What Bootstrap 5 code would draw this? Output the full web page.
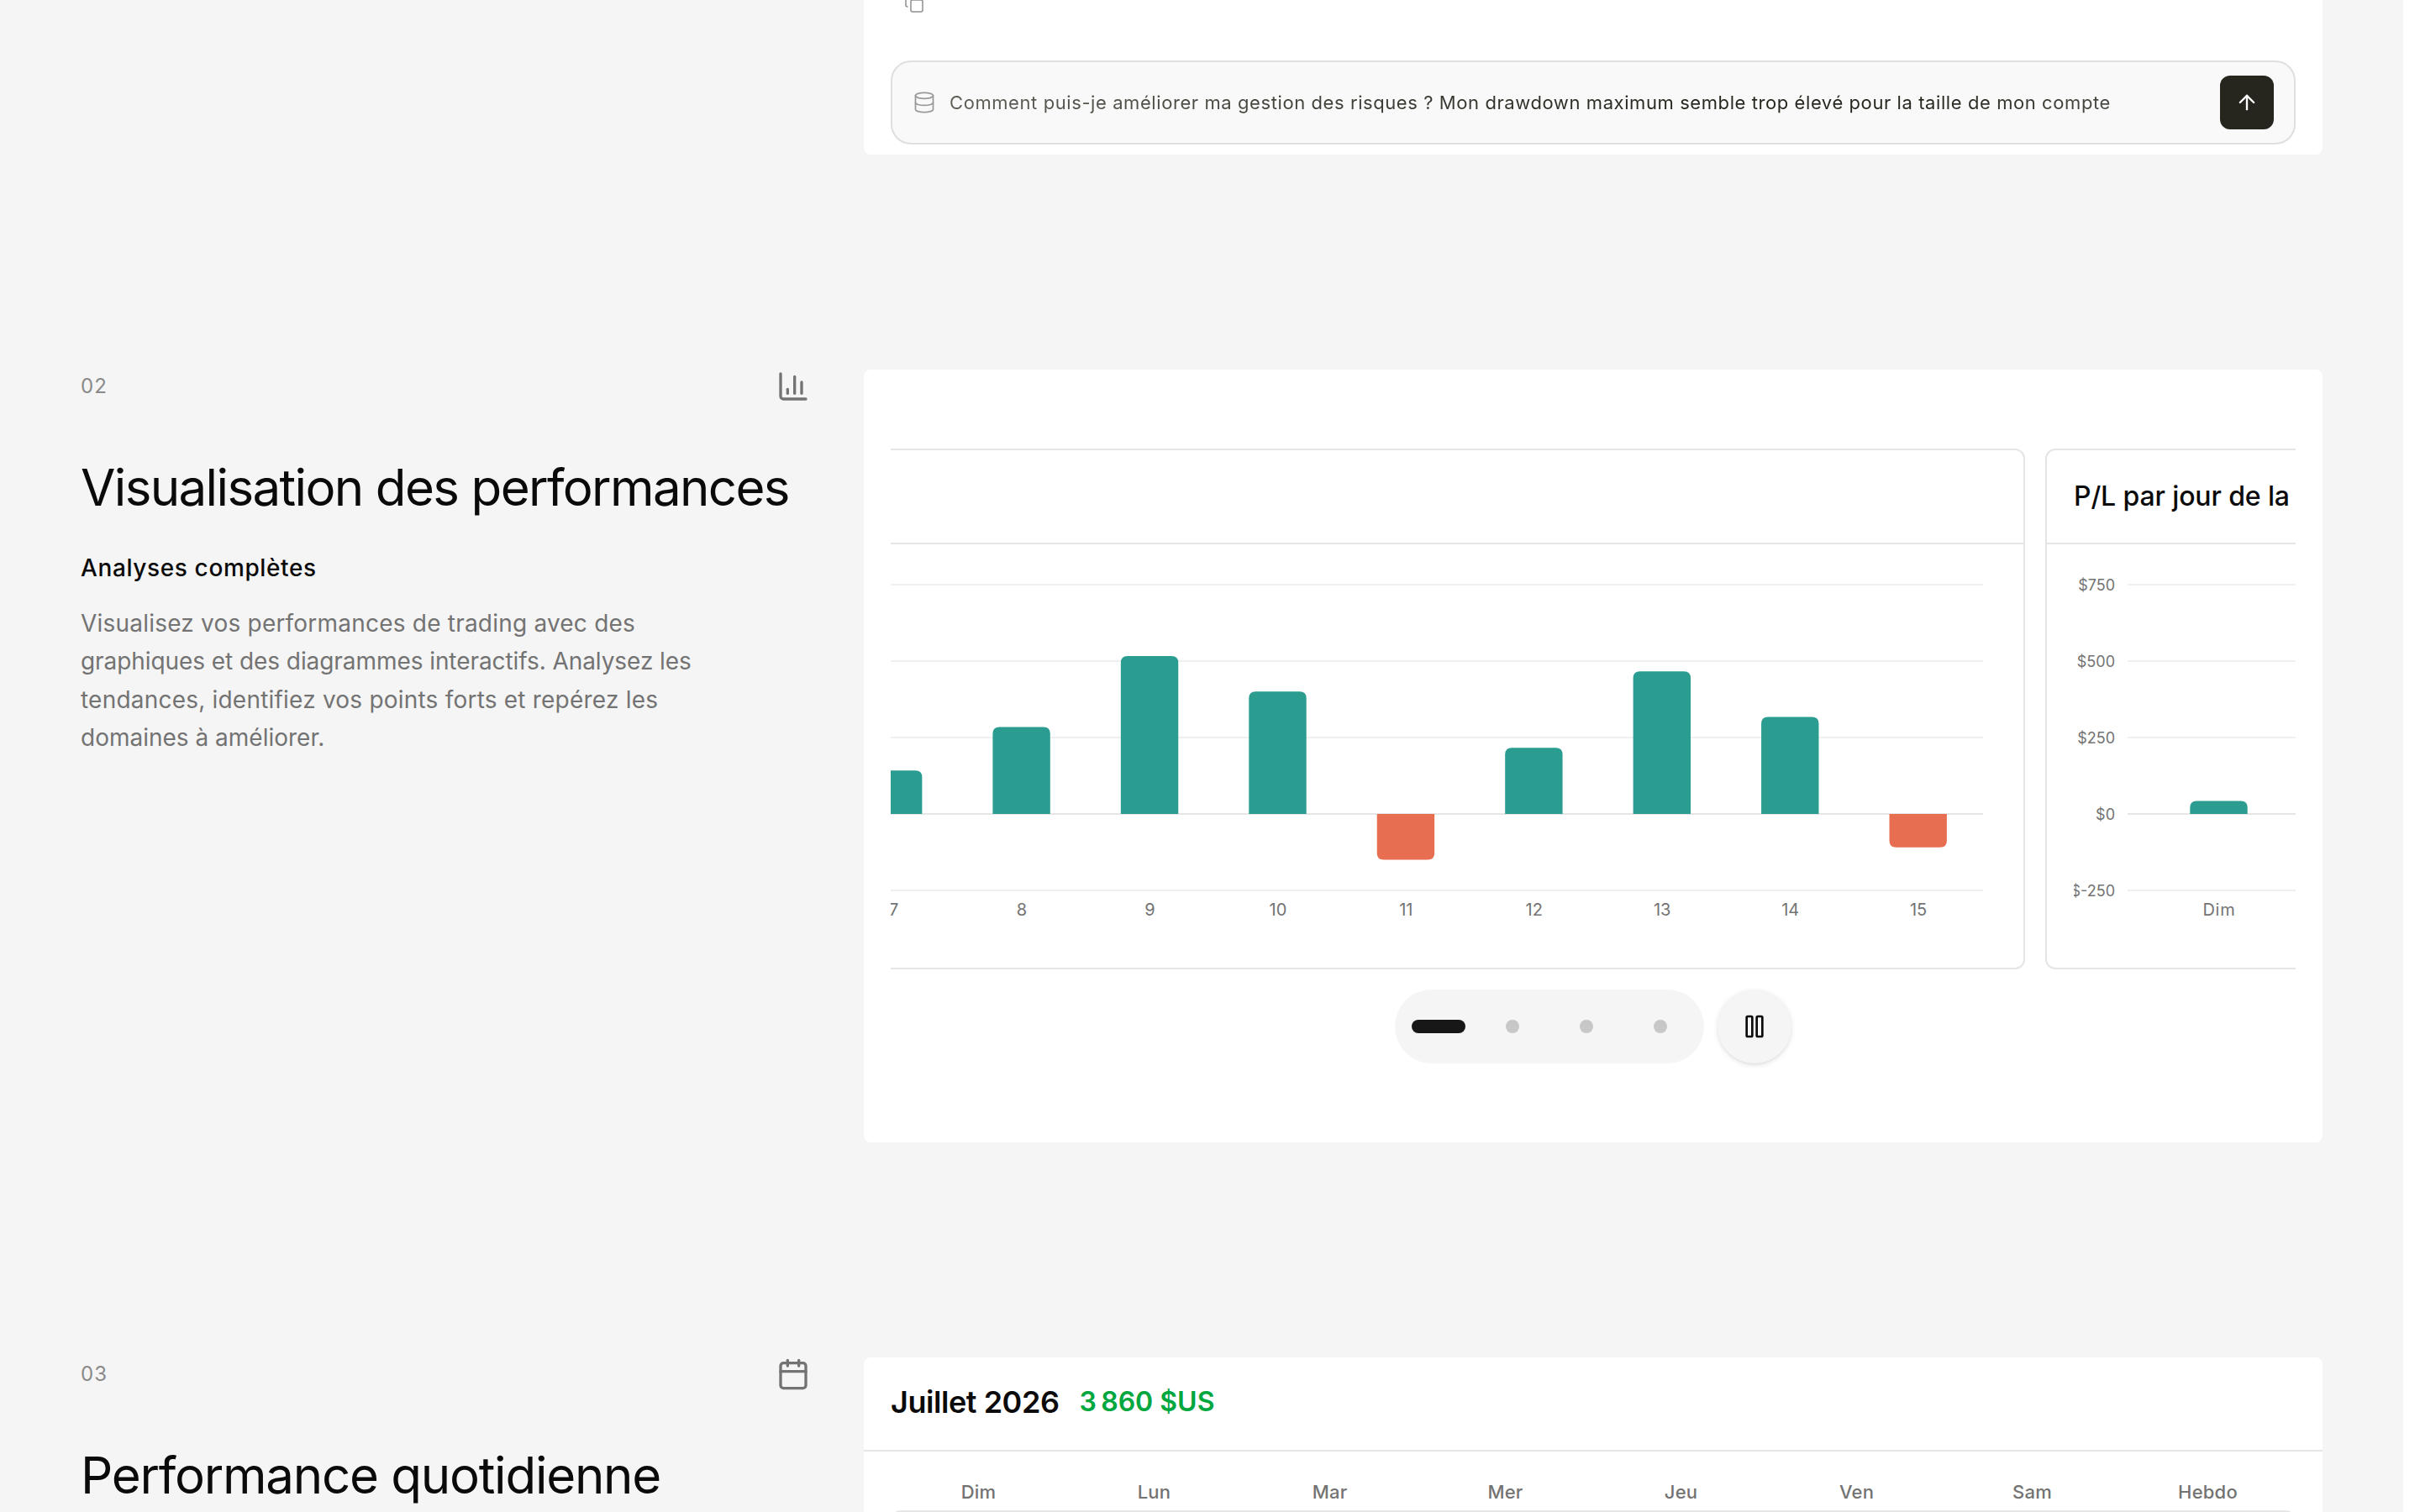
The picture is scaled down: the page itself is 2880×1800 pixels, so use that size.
<!DOCTYPE html>
<html lang="fr">
<head>
  <meta charset="UTF-8" />
  <title>Journal de trading</title>
  <link href="https://cdn.jsdelivr.net/npm/bootstrap@5.3.0/dist/css/bootstrap.min.css" rel="stylesheet">
  <style>
    body {
      font-family: Inter, "Liberation Sans", sans-serif;
      background-color: #fff;
      color: #0a0a0a;
    }

    .page {
      width: 2860px;
      height: 1800px;
      padding: 0 96px;
      gap: 256px;
      background-color: #f5f5f5;
    }

    .feature {
      display: grid;
      grid-template-columns: 868px 1736px;
      gap: 64px;
      flex-shrink: 0;
    }

    .panel {
      background: #fff;
      border-radius: 8px;
    }

    .icon {
      fill: none;
      stroke: currentColor;
      stroke-width: 2;
      stroke-linecap: round;
      stroke-linejoin: round;
      flex-shrink: 0;
    }

    .icon-thin {
      stroke-width: 1.5;
    }

    /* left column */
    .feature-head {
      height: 40px;
      margin-bottom: 64px;
      color: #737373;
    }

    .feature-no {
      font-size: 24px;
      letter-spacing: 1.2px;
      color: #8a8a8a;
    }

    .feature-title {
      font-size: 60px;
      font-weight: 400;
      line-height: 72px;
      letter-spacing: -1.63px;
      margin-bottom: 40px;
    }

    .feature-title.loose {
      letter-spacing: -1.25px;
    }

    .feature-sub {
      font-size: 28px;
      font-weight: 500;
      line-height: 40px;
      letter-spacing: 0.62px;
      margin-bottom: 23.5px;
    }

    .feature-text {
      font-size: 28px;
      line-height: 45.5px;
      max-width: 768px;
      color: #737373;
    }

    .feature-text .loose {
      letter-spacing: 0.21px;
    }

    .feature-text .tight {
      letter-spacing: -0.07px;
    }

    /* chat */
    .chat-panel {
      height: 184px;
      padding: 0 32px 12px;
      border-radius: 0 0 8px 8px;
    }

    .chat-copy {
      margin: -8px 0 0 16px;
      color: #8f8f8f;
    }

    .chat-input {
      height: 100px;
      border: 2px solid #dfdfdf;
      border-radius: 24px;
      background: #f9f9f9;
      padding: 0 24px;
      gap: 16px;
    }

    .chat-input .icon-db {
      color: #9a9a9a;
    }

    .chat-text {
      font-size: 22px;
      letter-spacing: 0.58px;
      color: transparent;
      background: linear-gradient(90deg, #5e5e57, #26251e 62%, #26251e 85%, #4a4a44);
      -webkit-background-clip: text;
      background-clip: text;
    }

    .chat-send {
      width: 64px;
      height: 64px;
      border-radius: 12px;
      background: #26251e;
      color: #fff;
    }

    /* carousel */
    .carousel-panel {
      height: 920px;
      padding: 94px 32px 0;
    }

    .chart-track {
      gap: 24px;
      margin-bottom: 24px;
    }

    .chart-card {
      height: 620px;
      border: 2px solid #e5e5e5;
      border-radius: 12px;
      flex-shrink: 0;
    }

    .chart-wide {
      width: 2434px;
      margin-left: -1084px;
    }

    .chart-week {
      width: 1200px;
    }

    .chart-title {
      height: 112px;
      border-bottom: 2px solid #e5e5e5;
      padding: 0 32px;
      font-size: 32px;
      font-weight: 500;
      letter-spacing: -0.12px;
      white-space: nowrap;
    }

    .chart-card svg {
      display: block;
      margin-left: 32px;
    }

    .gridline { stroke: #f0f0f0; stroke-width: 2; }
    .zeroline { stroke: #e5e5e5; stroke-width: 2; }
    .bar-up { fill: #2a9d90; }
    .bar-down { fill: #e76e50; }
    .tick-x { font-size: 20px; fill: #737373; text-anchor: middle; }
    .tick-name { letter-spacing: 0.8px; }
    .tick-y { font-size: 18px; fill: #737373; text-anchor: end; }

    .dots {
      height: 88px;
      padding: 0 20px;
      gap: 24px;
      background: #f5f5f5;
    }

    .dot-slot {
      width: 64px;
    }

    .dot {
      width: 16px;
      height: 16px;
      background: #c7c7c7;
    }

    .dot.active {
      width: 64px;
      background: #171717;
    }

    .pause {
      width: 88px;
      height: 88px;
      background: #f5f5f5;
      color: #0a0a0a;
      box-shadow: 0 2px 6px rgba(0,0,0,0.1), 0 2px 4px -2px rgba(0,0,0,0.1);
    }

    /* calendar */
    .cal-panel {
      height: 920px;
    }

    .cal-head {
      height: 112px;
      border-bottom: 2px solid #e5e5e5;
      padding: 0 32px 4px;
      gap: 24px;
    }

    .cal-month {
      font-size: 36px;
      font-weight: 600;
      letter-spacing: -0.45px;
    }

    .cal-total {
      font-size: 32px;
      font-weight: 600;
      color: #00a63e;
    }

    .cal-days {
      display: grid;
      grid-template-columns: repeat(8, 1fr);
      padding: 0 32px;
      margin-top: 31px;
      height: 39px;
      font-size: 22px;
      font-weight: 500;
      line-height: 34px;
      letter-spacing: 0.2px;
      color: #737373;
    }

    .cal-grid {
      margin: 0 32px;
      height: 600px;
      border: 2px solid #e5e5e5;
      border-radius: 12px;
    }
  </style>
</head>
<body>

  <main class="page d-flex flex-column overflow-hidden">

    <!-- 01 assistant -->
    <section class="feature">
      <div></div>
      <div class="panel chat-panel d-flex flex-column justify-content-between">
        <svg class="icon icon-thin chat-copy" width="24" height="24" viewBox="0 0 24 24">
          <rect x="8" y="8" width="14" height="14" rx="2" />
          <path d="M4 16c-1.1 0-2-.9-2-2V4c0-1.1.9-2 2-2h10c1.1 0 2 .9 2 2" />
        </svg>
        <div class="chat-input d-flex align-items-center">
          <svg class="icon icon-thin icon-db" width="28" height="28" viewBox="0 0 24 24">
            <ellipse cx="12" cy="5" rx="9" ry="3" />
            <path d="M3 5v14a9 3 0 0 0 18 0V5" />
            <path d="M3 12a9 3 0 0 0 18 0" />
          </svg>
          <span class="chat-text text-nowrap">Comment puis-je améliorer ma gestion des risques ? Mon drawdown maximum semble trop élevé pour la taille de mon compte</span>
          <div class="chat-send ms-auto d-flex align-items-center justify-content-center">
            <svg class="icon" width="28" height="28" viewBox="0 0 24 24">
              <path d="m5 12 7-7 7 7" />
              <path d="M12 19V5" />
            </svg>
          </div>
        </div>
      </div>
    </section>

    <!-- 02 charts -->
    <section class="feature">
      <div>
        <div class="feature-head d-flex align-items-center justify-content-between">
          <span class="feature-no">02</span>
          <svg class="icon" width="40" height="40" viewBox="0 0 24 24">
            <path d="M3 3v16a2 2 0 0 0 2 2h16" />
            <path d="M18 17V9" />
            <path d="M13 17V5" />
            <path d="M8 17v-3" />
          </svg>
        </div>
        <h2 class="feature-title">Visualisation des performances</h2>
        <h3 class="feature-sub">Analyses complètes</h3>
        <p class="feature-text">
          <span class="loose">Visualisez vos performances de trading avec des</span><br>
          <span class="tight">graphiques et des diagrammes interactifs. Analysez les</span><br>
          <span class="loose">tendances, identifiez vos points forts et repérez les</span><br>
          domaines à améliorer.
        </p>
      </div>
      <div class="panel carousel-panel">
        <div class="chart-track d-flex overflow-hidden">
          <div class="chart-card chart-wide">
            <div class="chart-title"></div>
            <svg id="chartDaily" width="2366" height="500" viewBox="10 648 2366 500"></svg>
          </div>
          <div class="chart-card chart-week">
            <div class="chart-title d-flex align-items-center">P/L par jour de la</div>
            <svg id="chartWeek" width="1132" height="500" viewBox="2468 648 1132 500"></svg>
          </div>
        </div>
        <div class="d-flex justify-content-center gap-3">
          <div class="dots d-flex align-items-center rounded-pill">
            <div class="dot-slot d-flex justify-content-center"><span class="dot active rounded-pill"></span></div>
            <div class="dot-slot d-flex justify-content-center"><span class="dot rounded-pill"></span></div>
            <div class="dot-slot d-flex justify-content-center"><span class="dot rounded-pill"></span></div>
            <div class="dot-slot d-flex justify-content-center"><span class="dot rounded-pill"></span></div>
          </div>
          <div class="pause rounded-circle d-flex align-items-center justify-content-center">
            <svg class="icon" width="32" height="32" viewBox="0 0 24 24">
              <rect x="14" y="3" width="5" height="18" rx="1" />
              <rect x="5" y="3" width="5" height="18" rx="1" />
            </svg>
          </div>
        </div>
      </div>
    </section>

    <!-- 03 calendar -->
    <section class="feature">
      <div>
        <div class="feature-head d-flex align-items-center justify-content-between">
          <span class="feature-no">03</span>
          <svg class="icon" width="40" height="40" viewBox="0 0 24 24">
            <path d="M8 2v4" />
            <path d="M16 2v4" />
            <rect x="3" y="4" width="18" height="18" rx="2" />
            <path d="M3 10h18" />
          </svg>
        </div>
        <h2 class="feature-title loose">Performance quotidienne</h2>
      </div>
      <div class="panel cal-panel">
        <div class="cal-head d-flex align-items-center">
          <span class="cal-month">Juillet 2026</span>
          <span class="cal-total">3&#8239;860&nbsp;$US</span>
        </div>
        <div class="cal-days text-center">
          <span>Dim</span><span>Lun</span><span>Mar</span><span>Mer</span><span>Jeu</span><span>Ven</span><span>Sam</span><span>Hebdo</span>
        </div>
        <div class="cal-grid"></div>
      </div>
    </section>

  </main>

  <script src="https://cdn.jsdelivr.net/npm/bootstrap@5.3.0/dist/js/bootstrap.bundle.min.js"></script>

  <script>
    const ZERO = 969;
    const STEP = 91;
    const BAR = 68.4;

    function line(x1, x2, y, cls) {
      return `<line class="${cls}" x1="${x1}" x2="${x2}" y1="${y}" y2="${y}"/>`;
    }

    // rounded only on the side away from the zero line
    function bar(x, h) {
      const r = 8;
      const s = h > 0 ? -1 : 1;
      const end = ZERO - h;
      const d = `M${x} ${ZERO}V${end - s * r}Q${x} ${end} ${x + r} ${end}H${x + BAR - r}Q${x + BAR} ${end} ${x + BAR} ${end - s * r}V${ZERO}Z`;
      return `<path class="${h > 0 ? 'bar-up' : 'bar-down'}" d="${d}"/>`;
    }

    function grid(x1, x2) {
      let out = '';
      for (let i = -3; i <= 1; i++) {
        out += line(x1, x2, ZERO + i * STEP, i === 0 ? 'zeroline' : 'gridline');
      }
      return out;
    }

    const daily = { 7: 51.7, 8: 103.5, 9: 188, 10: 145.7, 11: -54.6, 12: 78.7, 13: 169.7, 14: 115.4, 15: -39.7 };
    let out = grid(74, 2360);
    Object.keys(daily).forEach(day => {
      const x = 2248.5 - (15 - day) * 152.44;
      out += bar(x, daily[day]);
      out += `<text class="tick-x" x="${x + 34.6}" y="1090">${day}</text>`;
    });
    document.getElementById('chartDaily').innerHTML = out;

    out = grid(2532, 3600);
    [750, 500, 250, 0, -250].forEach((v, i) => {
      out += `<text class="tick-y" x="2517" y="${702.5 + i * STEP}">$${v}</text>`;
    });
    out += bar(2606.3, 15.5);
    out += `<text class="tick-x tick-name" x="2641" y="1090">Dim</text>`;
    document.getElementById('chartWeek').innerHTML = out;
  </script>

</body>
</html>
